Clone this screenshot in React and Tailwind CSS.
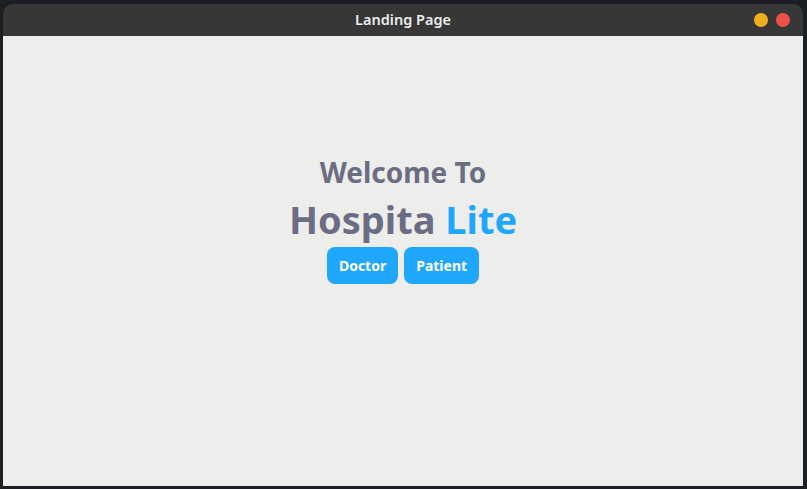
export default function App() {
  return (
    <div className="w-[807px] h-[489px] bg-[#1b1e23] pt-1 pl-[3px] overflow-hidden font-['Noto_Sans',sans-serif]">
      <div className="w-[800px] h-[482px] flex flex-col rounded-t-[10px] overflow-hidden">
        {/* Title bar */}
        <div className="h-8 bg-[#373737] flex items-center justify-center relative shrink-0">
          <span className="text-[14.5px] font-semibold text-[#ececec]">Landing Page</span>
          <div className="absolute right-[13px] top-[9px] flex gap-2">
            <div className="w-[14px] h-[14px] rounded-full bg-[#f1ae1c]" />
            <div className="w-[14px] h-[14px] rounded-full bg-[#ea5149]" />
          </div>
        </div>

        {/* Content */}
        <div className="flex-1 bg-[#ededeb] flex flex-col items-center pt-[117px]">
          <h2 className="text-[28px] leading-[38px] font-bold text-[#6b6d85]">Welcome To</h2>
          <h1 className="mt-[3px] text-[38px] leading-[50px] font-bold text-[#6b6d85]">
            Hospita <span className="text-[#1fa6fd]">Lite</span>
          </h1>
          <div className="flex gap-[6px] mt-[3px]">
            <button className="h-[37px] px-[12px] rounded-[8px] bg-[#1fa6fd] text-white text-[14px] font-bold">
              Doctor
            </button>
            <button className="h-[37px] px-[12px] rounded-[8px] bg-[#1fa6fd] text-white text-[14px] font-bold">
              Patient
            </button>
          </div>
        </div>
      </div>
    </div>
  );
}
